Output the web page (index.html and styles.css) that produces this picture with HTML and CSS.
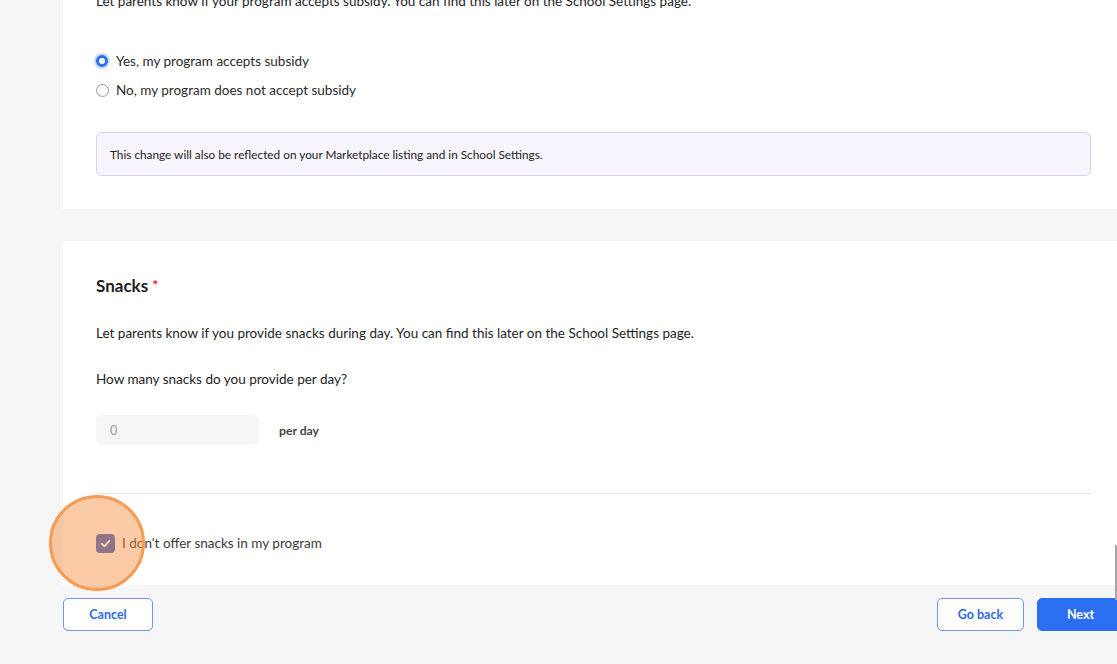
FILE: index.html
```html
<!DOCTYPE html>
<html lang="en">
<head>
    <meta charset="UTF-8">
    <meta name="viewport" content="width=device-width, initial-scale=1.0">
    <title>Program details - Snacks</title>
    <link rel="stylesheet" href="styles.css">
</head>
<body>
    <div class="page">
        <!-- Subsidy section (scrolled partly out of view) -->
        <section class="card card-subsidy">
            <p class="help">Let parents know if your program accepts subsidy. You can find this later on the School Settings page.</p>

            <div class="radio-group">
                <label class="radio-row">
                    <span class="radio checked"></span>
                    Yes, my program accepts subsidy
                </label>
                <label class="radio-row">
                    <span class="radio"></span>
                    No, my program does not accept subsidy
                </label>
            </div>

            <div class="notice">This change will also be reflected on your Marketplace listing and in School Settings.</div>
        </section>

        <!-- Snacks section -->
        <section class="card card-snacks">
            <h2 class="section-title">Snacks <span class="required">*</span></h2>
            <p class="help">Let parents know if you provide snacks during day. You can find this later on the School Settings page.</p>
            <p class="question">How many snacks do you provide per day?</p>

            <div class="amount-row">
                <div class="amount-input">0</div>
                <span class="unit">per day</span>
            </div>

            <hr class="divider">

            <label class="check-row">
                <span class="checkbox">
                    <svg viewBox="0 0 12 12" width="13" height="13"><path d="M2.6 6.3 L5 8.6 L9.5 3.6" fill="none" stroke="#fff" stroke-width="1.9" stroke-linecap="round" stroke-linejoin="round"/></svg>
                </span>
                I don't offer snacks in my program
                <span class="click-marker"></span>
            </label>
        </section>

        <!-- Footer actions -->
        <div class="actions">
            <button class="btn btn-outline">Cancel</button>
            <div class="actions-right">
                <button class="btn btn-outline">Go back</button>
                <button class="btn btn-primary">Next</button>
            </div>
        </div>
    </div>

    <div class="scroll-thumb"></div>
</body>
</html>
```

FILE: styles.css
```css
/* General styles */
body {
    margin: 0;
    padding: 0;
    overflow: hidden;
    height: 100vh;
    background: #f6f6f6;
    font-family: Lato, "Liberation Sans", sans-serif;
    color: #1d1d1f;
}

.page {
    width: 1061px;
    margin-left: 63px;
}

/* Cards */
.card {
    background: #fff;
    padding: 34px 33px 32px;
}

.card-subsidy {
    margin-top: -43px;
    padding-top: 35px;
    padding-bottom: 33px;
}

.card-snacks {
    margin-top: 32px;
    position: relative;
}

.help,
.question {
    margin: 0;
    font-size: 13.5px;
    line-height: 18px;
}

.section-title {
    margin: 0;
    font-size: 17px;
    line-height: 20px;
    font-weight: 700;
}

.required {
    color: #e5202e;
    font-size: 14px;
    vertical-align: 2px;
}

.card-snacks .help {
    margin-top: 28px;
}

.card-snacks .question {
    margin-top: 28px;
}

/* Radios */
.radio-group {
    margin-top: 41px;
    display: flex;
    flex-direction: column;
    gap: 9px;
}

.radio-row {
    display: flex;
    align-items: center;
    gap: 7px;
    height: 20px;
    font-size: 13.5px;
    color: #2b2b2b;
}

.radio {
    width: 11px;
    height: 11px;
    border: 1px solid #9a9a9a;
    border-radius: 50%;
    box-sizing: content-box;
    background: #fff;
}

.radio.checked {
    width: 6px;
    height: 6px;
    border: 3.5px solid #2c6fe6;
    box-shadow: 0 0 0 2px #c9dbfb;
    margin-right: 1px;
}

/* Notice box */
.notice {
    margin-top: 32px;
    background: #f8f5fe;
    border: 1px solid #d8cff2;
    border-radius: 6px;
    padding: 0 13px;
    height: 42px;
    display: flex;
    align-items: center;
    font-size: 11.8px;
    color: #222;
}

/* Amount input */
.amount-row {
    margin-top: 27px;
    display: flex;
    align-items: center;
    gap: 20px;
}

.amount-input {
    width: 163px;
    height: 30px;
    box-sizing: border-box;
    padding: 0 14px;
    display: flex;
    align-items: center;
    background: #f6f6f6;
    border-radius: 6px;
    font-size: 12.5px;
    color: #9a9a9a;
}

.unit {
    font-size: 12.2px;
    font-weight: 700;
    color: #444;
}

.divider {
    margin: 48px 0 39px;
    border: 0;
    border-top: 1px solid #e3e3e3;
}

/* Checkbox row */
.check-row {
    position: relative;
    display: flex;
    align-items: center;
    gap: 7px;
    height: 20px;
    font-size: 13.5px;
    color: #3a3a3a;
}

.checkbox {
    width: 19px;
    height: 19px;
    border-radius: 4px;
    background: #3a63c9;
    display: flex;
    align-items: center;
    justify-content: center;
}

/* Click highlight drawn over the checkbox */
.click-marker {
    position: absolute;
    left: -47px;
    top: -38px;
    width: 90px;
    height: 90px;
    border-radius: 50%;
    border: 3px solid #f79a52;
    background: rgba(247, 140, 62, 0.45);
    pointer-events: none;
}

/* Footer buttons */
.actions {
    margin-top: 13px;
    display: flex;
    justify-content: space-between;
}

.actions-right {
    display: flex;
    gap: 13px;
}

.btn {
    height: 33px;
    border-radius: 5px;
    font-family: Lato, "Liberation Sans", sans-serif;
    font-size: 12.5px;
    font-weight: 700;
    cursor: pointer;
}

.btn-outline {
    width: 90px;
    background: #fff;
    border: 1px solid #6d98ea;
    color: #2c6ae0;
}

.actions-right .btn-outline {
    width: 87px;
}

.btn-primary {
    width: 87px;
    background: #2b6ff0;
    border: 1px solid #2b6ff0;
    color: #fff;
}

.scroll-thumb {
    position: fixed;
    right: 0;
    top: 545px;
    width: 2px;
    height: 55px;
    background: #a5a5a5;
}
```
